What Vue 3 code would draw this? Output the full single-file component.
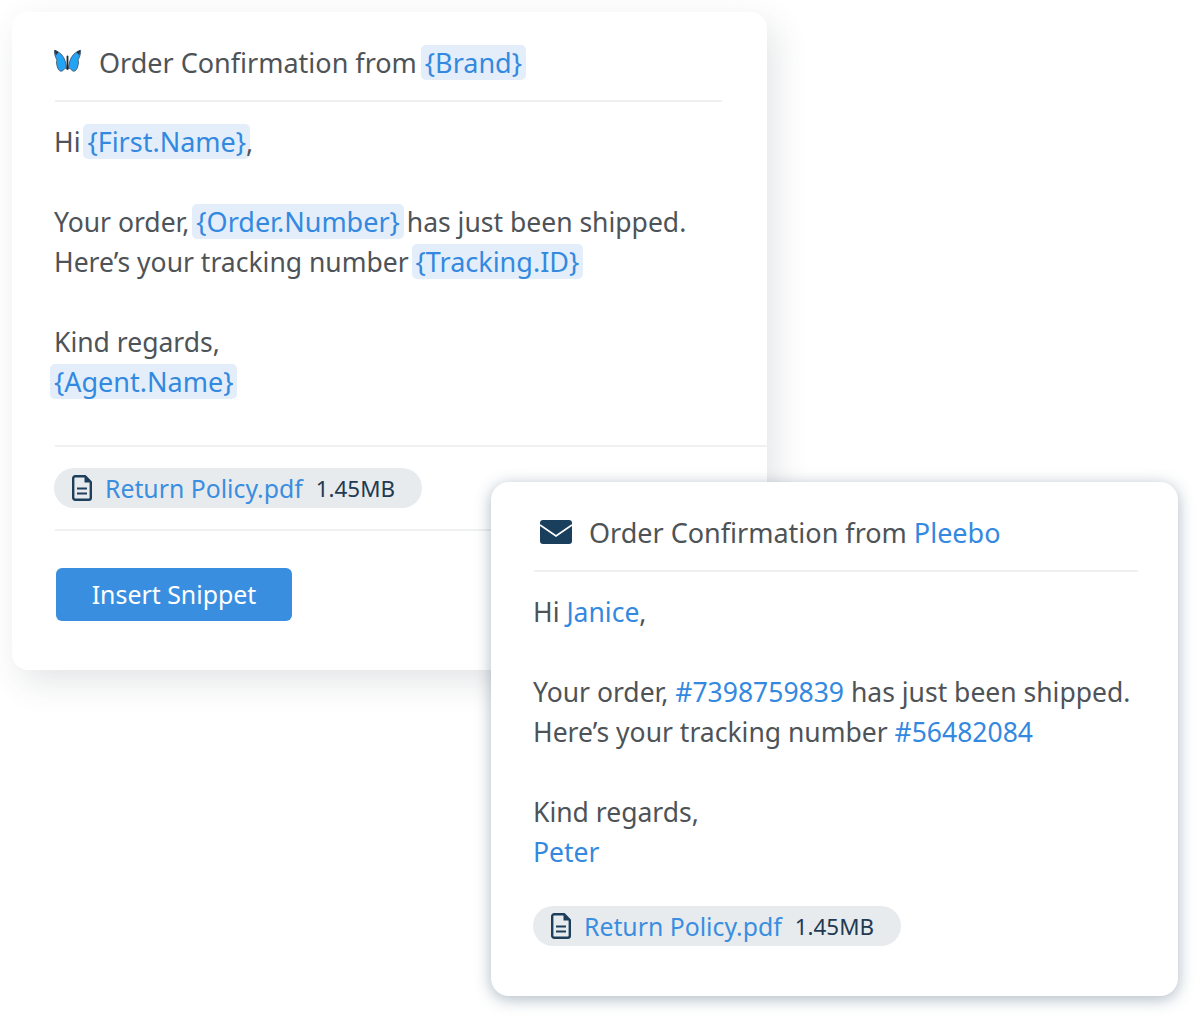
<script setup>
const tpl = [
  [{ t: 'Hi ' }, { v: '{First.Name}' }, { t: ',' }],
  [],
  [{ t: 'Your order, ' }, { v: '{Order.Number}' }, { t: ' has just been shipped.' }],
  [{ t: 'Here’s your tracking number ' }, { v: '{Tracking.ID}' }],
  [],
  [{ t: 'Kind regards,' }],
  [{ v: '{Agent.Name}' }],
]
const out = [
  [{ t: 'Hi ' }, { v: 'Janice' }, { t: ',' }],
  [],
  [{ t: 'Your order, ' }, { v: '#7398759839' }, { t: ' has just been shipped.' }],
  [{ t: 'Here’s your tracking number ' }, { v: '#56482084' }],
  [],
  [{ t: 'Kind regards,' }],
  [{ v: 'Peter' }],
]
</script>

<template>
  <div class="stage">
    <section class="card back">
      <header class="head">
        <svg class="fly" viewBox="0 0 27 23">
          <defs>
            <radialGradient id="wing" cx="50%" cy="55%" r="65%">
              <stop offset="0" stop-color="#16a9f5"/>
              <stop offset="0.7" stop-color="#2f9ff0"/>
              <stop offset="1" stop-color="#1f6fb5"/>
            </radialGradient>
          </defs>
          <path d="M12.800 20C12 14.500 11 9 7.500 5.500C5 3 2.500 1.800 0.600 1.200C0 4 1.300 8.500 3 11C1.800 12.500 2.800 17.500 4.500 20.500C6 23 8.500 22.500 10 20.500C11.300 18.500 12 19.500 12.800 20Z" fill="url(#wing)" stroke="#2b3f52" stroke-width="0.700"/>
          <path d="M14.200 20C15 14.500 16 9 19.500 5.500C22 3 24.500 1.800 26.400 1.200C27 4 25.700 8.500 24 11C25.200 12.500 24.200 17.500 22.500 20.500C21 23 18.500 22.500 17 20.500C15.700 18.500 15 19.500 14.200 20Z" fill="url(#wing)" stroke="#2b3f52" stroke-width="0.700"/>
          <path d="M13.500 7.500V20" stroke="#1b2a38" stroke-width="1.800" stroke-linecap="round"/>
          <path d="M0.600 1.200C1.500 1.500 3 2 4.500 3.200L2 6ZM26.400 1.200C25.500 1.500 24 2 22.500 3.200L25 6Z" fill="#22323f"/>
        </svg>
        <span>Order Confirmation from</span><mark class="var brand">{Brand}</mark>
      </header>
      <div class="body">
        <p v-for="(l, i) in tpl" :key="i" class="line"><template v-for="(s, j) in l" :key="j"><mark v-if="s.v" class="var">{{ s.v }}</mark><template v-else>{{ s.t }}</template></template></p>
      </div>
      <div class="attach-row">
        <div class="pill">
          <svg class="doc" viewBox="0 0 20 26"><path d="M1.200 3.200A2 2 0 0 1 3.200 1.200H13L18.800 7V22.800A2 2 0 0 1 16.800 24.800H3.200A2 2 0 0 1 1.200 22.800Z" fill="none" stroke="#1d3f5c" stroke-width="2.400" stroke-linejoin="round"/><path d="M12.500 1.500V7.500H18.500Z" fill="#1d3f5c"/><path d="M5 13.500H15M5 18.500H15" stroke="#1d3f5c" stroke-width="2.200"/></svg>
          <span class="name">Return Policy.pdf</span><span class="size">1.45MB</span>
        </div>
      </div>
      <button class="btn">Insert Snippet</button>
    </section>

    <section class="card front">
      <header class="head">
        <svg class="env" viewBox="0 0 32 24"><rect width="32" height="24" rx="3" fill="#1a3f5c"/><path d="M0 5L16 16L32 5" fill="none" stroke="#fff" stroke-width="1.800"/></svg>
        <span>Order Confirmation from <span class="link">Pleebo</span></span>
      </header>
      <div class="body">
        <p v-for="(l, i) in out" :key="i" class="line"><template v-for="(s, j) in l" :key="j"><span v-if="s.v" class="link">{{ s.v }}</span><template v-else>{{ s.t }}</template></template></p>
      </div>
      <div class="pill">
        <svg class="doc" viewBox="0 0 20 26"><path d="M1.200 3.200A2 2 0 0 1 3.200 1.200H13L18.800 7V22.800A2 2 0 0 1 16.800 24.800H3.200A2 2 0 0 1 1.200 22.800Z" fill="none" stroke="#1d3f5c" stroke-width="2.400" stroke-linejoin="round"/><path d="M12.500 1.500V7.500H18.500Z" fill="#1d3f5c"/><path d="M5 13.500H15M5 18.500H15" stroke="#1d3f5c" stroke-width="2.200"/></svg>
        <span class="name">Return Policy.pdf</span><span class="size">1.45MB</span>
      </div>
    </section>
  </div>
</template>

<style scoped>
.stage { position: relative; width: 1200px; height: 1018px; background: #fff; font-family: "Noto Sans", sans-serif; color: #4e5357; font-size: 26.5px; overflow: hidden; }
.card { position: absolute; background: #fff; box-sizing: border-box; }
.back { left: 12px; top: 12px; width: 755px; height: 658px; padding: 30px 44px 0 42px; border-radius: 16px; box-shadow: 8px 12px 34px rgba(60, 70, 80, 0.14); }
.front { left: 491px; top: 482px; width: 687px; height: 514px; padding: 30px 40px 0 42px; border-radius: 18px; box-shadow: 0 3px 16px rgba(40, 70, 100, 0.38); }
.head { display: flex; align-items: center; height: 40px; margin: 0 1px; padding-bottom: 18px; border-bottom: 2px solid #eef0f2; font-size: 27px; }
.front .head { margin-right: 0; }
.body { padding-top: 20px; }
.line { margin: 0; height: 40px; line-height: 40px; white-space: pre; }
.var { display: inline-block; height: 35px; line-height: 35px; margin: 0 -4px; padding: 0 4px; background: #e3eefa; color: #3389e0; border-radius: 5px; font-size: 27px; }
.brand { margin: 0 0 0 4px; padding: 0 4px; }
.link { color: #3389e0; }
.fly { width: 27px; height: 23px; margin: -3px 18px 0 -1px; }
.env { width: 32px; height: 24px; margin: 0 17px 0 6px; }
.attach-row { margin: 43px -47px 0 1px; padding: 21px 0 21px; border-top: 2px solid #eef0f2; border-bottom: 2px solid #eef0f2; }
.pill { display: flex; align-items: center; height: 40px; width: 368px; box-sizing: border-box; padding-left: 18px; border-radius: 20px; background: #e8ebee; }
.back .pill { margin-left: -1px; }
.front .pill { margin-top: 34px; }
.doc { width: 20px; height: 26px; margin-right: 13px; }
.name { color: #3a8ee0; font-size: 24.8px; margin-right: 13px; }
.size { color: #1f3a52; font-size: 22.4px; }
.btn { display: block; margin: 37px 0 0 2px; padding: 0 0 1px; width: 236px; height: 53px; border: 0; border-radius: 6px; background: #3a8ee0; color: #fff; font: 24.9px "Noto Sans", sans-serif; }
</style>
